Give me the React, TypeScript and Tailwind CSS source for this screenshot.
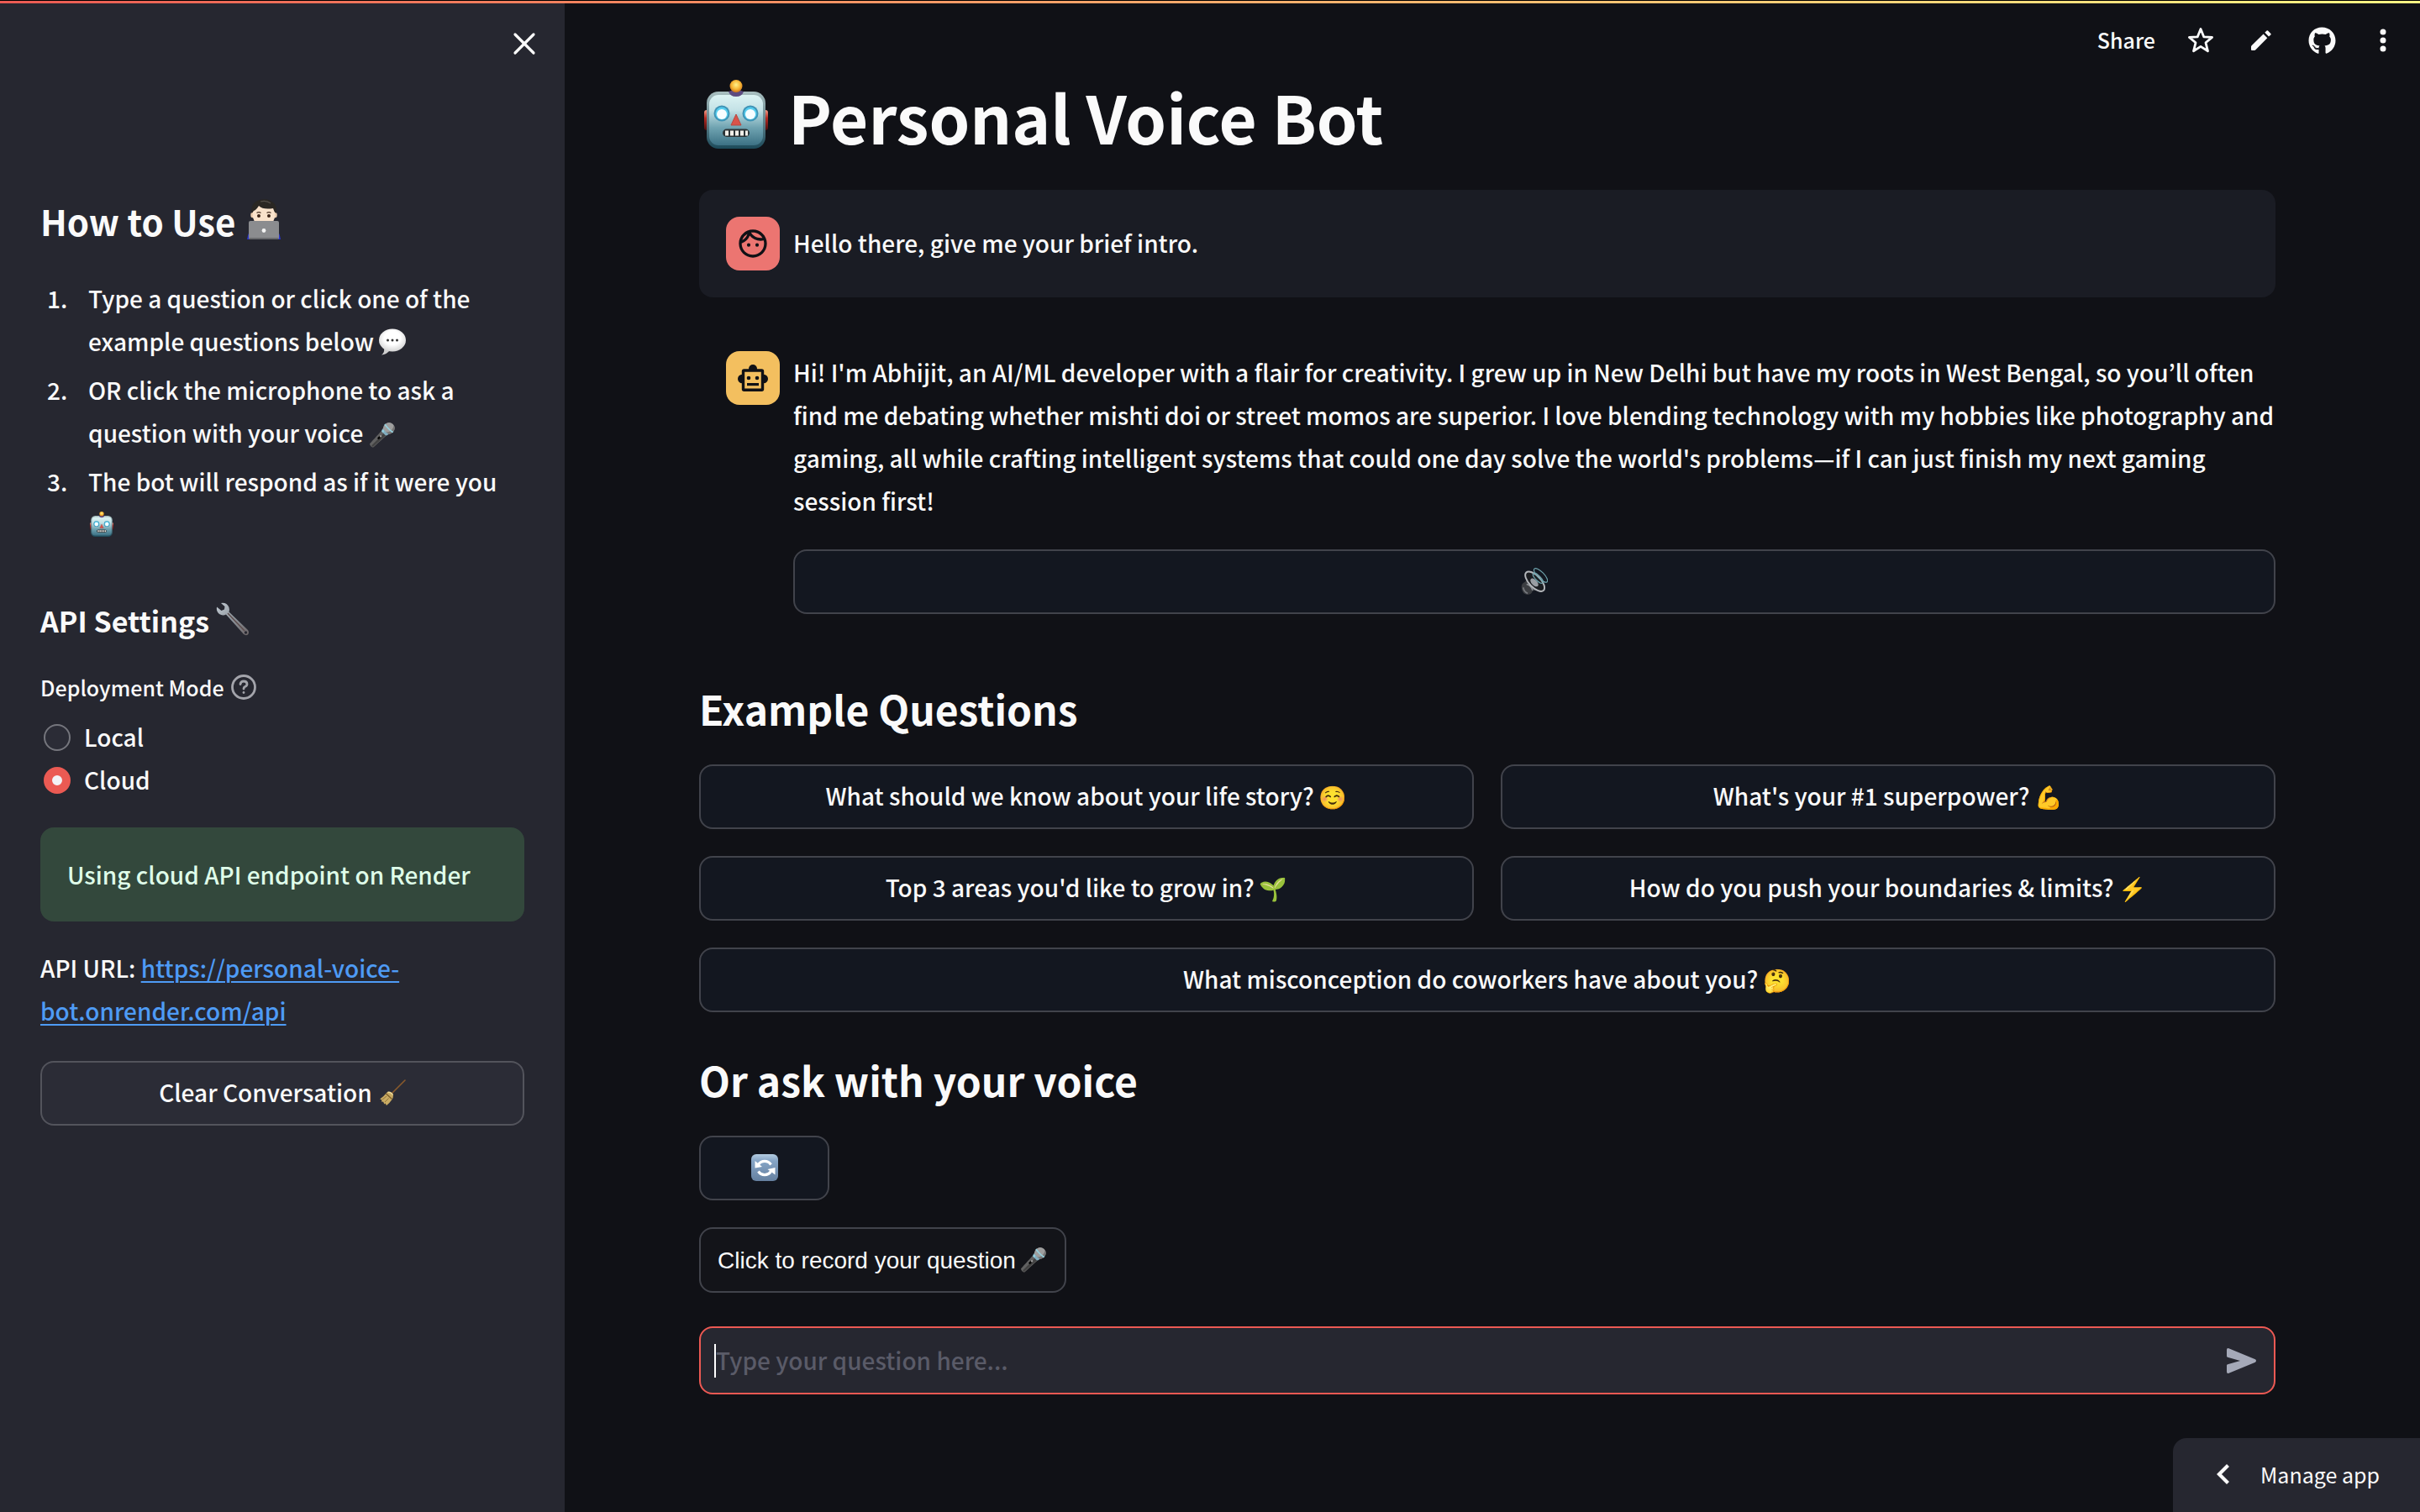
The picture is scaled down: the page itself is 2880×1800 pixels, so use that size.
import type { ReactNode } from "react";
import { X } from "lucide-react";
import { MdOutlineFace } from "react-icons/md";
import { FaGithub } from "react-icons/fa";

function RobotEmoji({ className }: { className: string }) {
  return (
    <svg viewBox="0 0 76 82" className={className} role="img" aria-label="robot">
      <defs>
        <linearGradient id="robotFace" x1="0" y1="0" x2="0" y2="1">
          <stop offset="0" stopColor="#dcf3f3" />
          <stop offset="0.3" stopColor="#c4e2e6" />
          <stop offset="0.65" stopColor="#6fa3b1" />
          <stop offset="1" stopColor="#3c7184" />
        </linearGradient>
        <linearGradient id="robotShell" x1="0" y1="0" x2="0" y2="1">
          <stop offset="0" stopColor="#a9bfc0" />
          <stop offset="1" stopColor="#1c4a5a" />
        </linearGradient>
        <radialGradient id="robotBulb" cx="0.5" cy="0.4" r="0.6">
          <stop offset="0" stopColor="#fff28a" />
          <stop offset="0.6" stopColor="#f6b433" />
          <stop offset="1" stopColor="#c9701c" />
        </radialGradient>
        <linearGradient id="robotEar" x1="0" y1="0" x2="0" y2="1">
          <stop offset="0" stopColor="#f59a85" />
          <stop offset="0.4" stopColor="#b52a22" />
          <stop offset="1" stopColor="#4d0f10" />
        </linearGradient>
      </defs>
      <rect x="0" y="36" width="8" height="24" rx="3" fill="url(#robotEar)" />
      <rect x="68" y="36" width="8" height="24" rx="3" fill="url(#robotEar)" />
      <rect x="3" y="14" width="70" height="68" rx="14" fill="url(#robotShell)" />
      <rect x="6" y="18" width="64" height="60" rx="11" fill="url(#robotFace)" />
      <path d="M29 14 Q38 10 47 14 Q45 20 38 20 Q31 20 29 14Z" fill="#5c4b80" />
      <circle cx="38" cy="7.5" r="7.5" fill="url(#robotBulb)" />
      <circle cx="21" cy="40" r="9.5" fill="#3f93b5" />
      <circle cx="21" cy="40" r="7.6" fill="#56cdee" />
      <circle cx="21" cy="41" r="6" fill="#f7fdff" />
      <circle cx="55" cy="40" r="9.5" fill="#3f93b5" />
      <circle cx="55" cy="40" r="7.6" fill="#56cdee" />
      <circle cx="55" cy="41" r="6" fill="#f7fdff" />
      <path d="M38 41 L44 54 H32Z" fill="#d9534a" stroke="#b8473f" strokeLinejoin="round" />
      <rect x="22" y="58.5" width="32" height="9.5" rx="4.7" fill="#2c3437" />
      <path d="M25 60.5h4v6h-4zM31 60.5h4v6h-4zM37 60.5h4v6h-4zM43 60.5h4v6h-4zM49 60.5h3v6h-3z" fill="#f1efe9" />
    </svg>
  );
}

function TechnologistEmoji() {
  return (
    <svg viewBox="0 0 42 48" className="-mt-1 h-12 w-[42px]" role="img" aria-label="technologist">
      <path d="M1 48 Q2 38 9 35 H33 Q40 38 41 48Z" fill="#2a35c9" />
      <ellipse cx="7.5" cy="19" rx="2.2" ry="3.2" fill="#eccdb0" />
      <ellipse cx="34.5" cy="19" rx="2.2" ry="3.2" fill="#eccdb0" />
      <path d="M8 14 Q8 6 21 6 Q34 6 34 14 V22 Q32 31 21 31 Q10 31 8 22Z" fill="#f9e2cb" />
      <path d="M6.500 17 Q5 4 16 1 Q27 -1.5 33 5 Q37 9 35.500 17 Q33 15 32 11 Q20 13 15 8 Q12 13 9 14 Q8 15 6.500 17Z" fill="#2a2723" />
      <path d="M17 3 Q24 1 29 5" stroke="#55504a" strokeWidth="1.2" fill="none" />
      <path d="M12.5 16.5 q2.5 -1.8 5 0M24.5 16.5 q2.5 -1.8 5 0" stroke="#4b3526" strokeWidth="1.2" fill="none" />
      <circle cx="15" cy="20" r="2" fill="#3b2418" />
      <circle cx="27" cy="20" r="2" fill="#3b2418" />
      <rect x="3" y="26" width="36" height="22" rx="2" fill="#8b8c8f" />
      <rect x="4" y="46" width="34" height="2" fill="#6a6b6e" />
      <circle cx="21" cy="37.5" r="2.4" fill="#f4f4f4" />
    </svg>
  );
}

function SpeechEmoji() {
  return (
    <svg viewBox="0 0 32 32" className="inline-block size-8 align-[-5px]" role="img" aria-label="speech balloon">
      <defs>
        <radialGradient id="bubble" cx="0.5" cy="0.4" r="0.6">
          <stop offset="0.5" stopColor="#ffffff" />
          <stop offset="1" stopColor="#d4d4d4" />
        </radialGradient>
      </defs>
      <path d="M6 24 Q7 29 3 31.5 Q9 31 13 26Z" fill="#cfcfcf" />
      <ellipse cx="16" cy="14" rx="16" ry="13.5" fill="url(#bubble)" />
      <circle cx="10.5" cy="14" r="1.5" fill="#333" />
      <circle cx="16" cy="14" r="1.5" fill="#333" />
      <circle cx="21.5" cy="14" r="1.5" fill="#333" />
    </svg>
  );
}

function WrenchEmoji() {
  return (
    <svg viewBox="0 0 40 40" className="-mt-1 size-10" role="img" aria-label="wrench">
      <defs>
        <linearGradient id="wrench" x1="0" y1="0" x2="1" y2="1">
          <stop offset="0" stopColor="#c3ccd4" />
          <stop offset="0.5" stopColor="#8d949b" />
          <stop offset="1" stopColor="#6b6466" />
        </linearGradient>
      </defs>
      <path
        d="M6 1 Q13 0 15.5 6 Q16.5 9 15.5 11.5 L38 33 Q40 36 38 38.5 Q35.500 40 33 38 L12 14.5 Q8 16.5 4 14 Q0 11 1 5.5 L6.5 10 L10 8.5 L10.5 5Z"
        fill="url(#wrench)"
      />
      <path d="M14 13 L34 34" stroke="#5d4c4d" strokeWidth="1.5" />
      <circle cx="35.5" cy="36" r="1.7" fill="#26272f" />
    </svg>
  );
}

function BroomEmoji() {
  return (
    <svg viewBox="0 0 32 32" className="size-8" role="img" aria-label="broom">
      <path d="M31 1 L14 18" stroke="#8a5a2c" strokeWidth="1.6" strokeLinecap="round" />
      <path d="M10 15 Q14 14 17 18.5 Q17 22 15.500 24 Q12 29 9 31 L7.500 28.500 L6.500 29.500 L5 26.500 L3.500 27 L3 24 L1 23.500 Q6 20 10 15Z" fill="#c9ab63" />
      <path d="M8.500 17 L15.500 23.500" stroke="#7d5f2c" strokeWidth="1.4" />
      <path d="M10.500 15.500 Q14 14.500 16.500 18.500" stroke="#f0dc9c" strokeWidth="1.4" fill="none" />
      <path d="M4 24 L9 20M7 27 L11.500 22.500" stroke="#947538" strokeWidth="1" />
    </svg>
  );
}

function SpeakerEmoji() {
  return (
    <svg viewBox="42 33 96 97" className="size-8" role="img" aria-label="speaker">
      <path d="M44 106 Q42 90 56 84 L70 70 L108 110 L84 116 Q80 128 66 130 Q46 128 44 106Z" fill="#3b3d41" />
      <path d="M62 92 Q78 96 84 114" stroke="#8f9398" strokeWidth="5" fill="none" />
      <path d="M50 104 Q52 120 66 125" stroke="#77797e" strokeWidth="5" fill="none" />
      <ellipse cx="92" cy="82" rx="45" ry="21" transform="rotate(46 92 82)" fill="#1b1d21" stroke="#b4b7bb" strokeWidth="6" />
      <ellipse cx="90" cy="86" rx="18" ry="10" transform="rotate(46 90 86)" fill="#9a9ea3" />
      <g fill="none" stroke="#6fa4ad" strokeWidth="3.5">
        <ellipse cx="113" cy="60" rx="33" ry="12" transform="rotate(46 113 60)" />
        <ellipse cx="103" cy="70" rx="24" ry="9" transform="rotate(46 103 70)" />
      </g>
    </svg>
  );
}

function RefreshEmoji() {
  return (
    <svg viewBox="0 0 32 32" className="size-8" role="img" aria-label="refresh">
      <defs>
        <linearGradient id="refresh" x1="0" y1="0" x2="0" y2="1">
          <stop offset="0" stopColor="#b4cde2" />
          <stop offset="0.25" stopColor="#86a5c6" />
          <stop offset="1" stopColor="#6580a0" />
        </linearGradient>
      </defs>
      <rect width="32" height="32" rx="6" fill="url(#refresh)" />
      <path d="M8.5 12.5 A9 9 0 0 1 23.5 12.5" stroke="#fff" strokeWidth="3.2" fill="none" />
      <path d="M23.5 20.5 A9 9 0 0 1 8.5 20.5" stroke="#fff" strokeWidth="3.2" fill="none" />
      <path d="M4.5 8 V16.5 L13 15Z" fill="#fff" />
      <path d="M28.5 24.5 V16 L19.5 18Z" fill="#fff" />
    </svg>
  );
}

function BotIcon() {
  return (
    <svg viewBox="0 0 36 32" className="h-8 w-9" fill="currentColor" aria-hidden="true">
      <circle cx="18" cy="5" r="5" />
      <circle cx="5.2" cy="17" r="5.2" />
      <circle cx="30.8" cy="17" r="5.2" />
      <rect x="6.5" y="7" width="23" height="23.2" rx="1" fill="#f3bf5f" stroke="currentColor" strokeWidth="3.4" />
      <circle cx="13" cy="16" r="2.3" />
      <circle cx="23" cy="16" r="2.3" />
      <rect x="11" y="22" width="14" height="3.2" />
    </svg>
  );
}

function Glyph({ children }: { children: ReactNode }) {
  return <span className="text-[27px]">{children}</span>;
}

const buttonBase =
  "flex h-[77px] items-center justify-center gap-1.5 rounded-2xl border-2 border-[#41434b] bg-[#131720] pb-0.5";

function QuestionButton({ label, emoji, wide }: { label: string; emoji: string; wide?: boolean }) {
  return (
    <button className={wide ? `${buttonBase} col-span-2` : buttonBase}>
      <span>{label}</span>
      <Glyph>{emoji}</Glyph>
    </button>
  );
}

function Step({ number, children }: { number: string; children: ReactNode }) {
  return (
    <li className="flex">
      <span className="w-[57px] shrink-0 pl-2">{number}</span>
      <p>{children}</p>
    </li>
  );
}

function Sidebar() {
  return (
    <aside className="flex w-[672px] shrink-0 flex-col bg-[#262730]">
      <div className="flex justify-end pt-[26px] pr-[26px]">
        <button aria-label="Close sidebar">
          <X size={44} strokeWidth={1.75} />
        </button>
      </div>
      <div className="flex flex-col px-12">
        <h2 className="mt-[164px] flex items-center gap-3 text-[42px] leading-[50px] font-bold">
          How to Use <TechnologistEmoji />
        </h2>
        <ol className="mt-[42px] flex list-none flex-col gap-[7px]">
          <Step number="1.">
            Type a question or click one of the example questions below <SpeechEmoji />
          </Step>
          <Step number="2.">
            OR click the microphone to ask a question with your voice <Glyph>🎤</Glyph>
          </Step>
          <Step number="3.">
            The bot will respond as if it were you
            <br />
            <RobotEmoji className="ml-0.5 inline-block h-[30px] w-7 align-[-3px]" />
          </Step>
        </ol>
        <h3 className="mt-[67px] flex items-center gap-2 text-[34px] leading-[44px] font-bold">
          API Settings <WrenchEmoji />
        </h3>
        <fieldset className="mt-[39px]">
          <legend className="flex items-center gap-2 text-[25px] leading-9">
            Deployment Mode
            <svg viewBox="0 0 30 30" className="size-[30px]" fill="none" stroke="#a3a4ab" strokeWidth="2.8" strokeLinecap="round" aria-label="Help">
              <circle cx="15" cy="15" r="13.5" />
              <path d="M11 11.5 Q11.5 8 15 8 Q19 8 19 11.5 Q19 13.5 16.5 14.5 Q15 15.3 15 17" />
              <path d="M15 21.5v.1" />
            </svg>
          </legend>
          <div className="mt-4 flex flex-col pl-1">
            <label className="flex items-center gap-4">
              <input type="radio" name="mode" className="size-8 appearance-none rounded-full border-2 border-[#75767d] bg-[#2b2c36]" />
              Local
            </label>
            <label className="flex items-center gap-4">
              <input type="radio" name="mode" defaultChecked className="size-8 appearance-none rounded-full border-[10px] border-[#eb5a53] bg-[#f3f3f6]" />
              Cloud
            </label>
          </div>
        </fieldset>
        <div className="mt-[31px] flex h-28 items-center rounded-2xl bg-[#33483c] px-8 text-[#dffde9]">
          Using cloud API endpoint on Render
        </div>
        <p className="mt-[30px]">
          API URL:{" "}
          <a href="https://personal-voice-bot.onrender.com/api" className="text-[#4e9bf5] underline decoration-2 underline-offset-4">
            https://personal-voice-
            <br />
            bot.onrender.com/api
          </a>
        </p>
        <button className="mt-[34px] flex h-[77px] items-center justify-center gap-2 rounded-2xl border-2 border-[#53545c] bg-[#2b2c36] pb-0.5">
          Clear Conversation <BroomEmoji />
        </button>
      </div>
    </aside>
  );
}

function Header() {
  return (
    <header className="flex h-[88px] items-center justify-end pr-7 text-[25px]">
      <button className="mr-[38px] pb-0.5 leading-9">Share</button>
      <button aria-label="Star" className="mr-10">
        <svg viewBox="0 0 32 32" className="size-8" fill="none" stroke="currentColor" strokeWidth="2.8" strokeLinejoin="round">
          <path d="M16 2.5 L19.7 11.8 L29.6 12.4 L22 18.8 L24.5 28.8 L16 23.4 L7.5 28.8 L10 18.8 L2.4 12.4 L12.3 11.8Z" />
        </svg>
      </button>
      <button aria-label="Edit" className="mr-10">
        <svg viewBox="0 0 32 32" className="size-8" fill="currentColor">
          <path d="M4 23.600 Q4 22.800 4.600 22.200 L18.600 8.500 L23.300 13.200 L9.400 27.300 Q8.800 28 8 28 H5 Q4 28 4 27Z" />
          <path d="M20.300 6.800 L22.600 4.600 Q23.300 3.900 24 4.600 L27.400 8 Q28.100 8.700 27.400 9.400 L25 11.600Z" />
        </svg>
      </button>
      <button aria-label="View source" className="mr-10">
        <FaGithub size={33} />
      </button>
      <button aria-label="Main menu">
        <svg viewBox="0 0 32 32" className="size-8" fill="currentColor">
          <circle cx="16" cy="6" r="3.5" />
          <circle cx="16" cy="16" r="3.5" />
          <circle cx="16" cy="26" r="3.5" />
        </svg>
      </button>
    </header>
  );
}

export default function App() {
  return (
    <div className="flex min-h-screen flex-col bg-[#101116] font-['Noto_Sans_CJK_KR','Noto_Color_Emoji',sans-serif] text-[28px] leading-[51px] font-medium text-[#fafafa]">
      <div className="h-1 border-t border-black bg-linear-to-r from-[#eb5a53] to-[#fdf583]" />
      <div className="flex grow">
        <Sidebar />
        <div className="min-w-0 grow">
          <Header />
          <main className="flex flex-col pr-[172px] pl-40">
            <h1 className="flex items-center gap-6 pl-1.5 text-[78px] leading-[92px] font-bold">
              <RobotEmoji className="-mt-1 h-[82px] w-[76px]" />
              Personal Voice Bot
            </h1>
            <div className="mt-[42px] flex gap-4 rounded-2xl bg-[#1a1c24] py-8 pl-8">
              <div className="flex size-16 shrink-0 items-center justify-center rounded-2xl bg-[#ec7571] text-[#101116]">
                <MdOutlineFace size={40} />
              </div>
              <p className="mt-1.5">Hello there, give me your brief intro.</p>
            </div>
            <div className="mt-8 flex gap-4 py-8 pl-8">
              <div className="flex size-16 shrink-0 items-center justify-center rounded-2xl bg-[#f3bf5f] text-[#101116]">
                <BotIcon />
              </div>
              <div className="flex min-w-0 grow flex-col">
                <p>
                  Hi! I'm Abhijit, an AI/ML developer with a flair for creativity. I grew up in New Delhi but have my roots in West Bengal, so
                  you’ll often find me debating whether mishti doi or street momos are superior. I love blending technology with my hobbies like
                  photography and gaming, all while crafting intelligent systems that could one day solve the world's problems—if I can just
                  finish my next gaming session first!
                </p>
                <button aria-label="Play audio" className={`${buttonBase} mt-8`}>
                  <SpeakerEmoji />
                </button>
              </div>
            </div>
            <h2 className="mt-[51px] text-[48px] leading-[58px] font-bold">Example Questions</h2>
            <div className="mt-[38px] grid grid-cols-2 gap-8">
              <QuestionButton label="What should we know about your life story?" emoji="☺️" />
              <QuestionButton label="What's your #1 superpower?" emoji="💪" />
              <QuestionButton label="Top 3 areas you'd like to grow in?" emoji="🌱" />
              <QuestionButton label="How do you push your boundaries & limits?" emoji="⚡" />
              <QuestionButton wide label="What misconception do coworkers have about you?" emoji="🤔" />
            </div>
            <h2 className="mt-[51px] text-[48px] leading-[58px] font-bold">Or ask with your voice</h2>
            <button aria-label="Refresh" className={`${buttonBase} mt-[38px] w-[155px]`}>
              <RefreshEmoji />
            </button>
            <button className="mt-8 flex h-[78px] items-center gap-1 self-start rounded-2xl border-2 border-[#41434b] bg-[#131419] px-5 font-['Liberation_Sans',sans-serif] font-normal">
              <span>Click to record your question</span>
              <Glyph>🎤</Glyph>
            </button>
            <form className="mt-10 flex h-[81px] items-center rounded-2xl border-2 border-[#ec5953] bg-[#262730] pr-[18px] pl-4" onSubmit={(e) => e.preventDefault()}>
              <span className="h-10 w-0.5 shrink-0 bg-white" />
              <input
                aria-label="Your question"
                placeholder="Type your question here..."
                className="h-full min-w-0 grow bg-transparent pb-0.5 outline-none placeholder:text-[#5a5b68]"
              />
              <button aria-label="Send">
                <svg viewBox="0 0 40 40" className="size-10" fill="#a5a9b8">
                  <path d="M2 7 Q2 4.500 4.500 5.300 L36 18.300 Q38 20 36 21.700 L4.500 34.700 Q2 35.500 2 33 V25.500 Q2 24.500 3 24.200 L18 20 L3 15.800 Q2 15.500 2 14.500Z" />
                </svg>
              </button>
            </form>
          </main>
          <button className="fixed right-0 bottom-0 flex h-[88px] items-center gap-8 rounded-tl-2xl bg-[#262730] px-12 pb-0.5 text-[25px] font-normal">
            <svg viewBox="0 0 24 32" className="h-8 w-6" fill="none" stroke="currentColor" strokeWidth="4.2">
              <path d="M17.5 5.5 L7 16 L17.5 26.5" />
            </svg>
            Manage app
          </button>
        </div>
      </div>
    </div>
  );
}
